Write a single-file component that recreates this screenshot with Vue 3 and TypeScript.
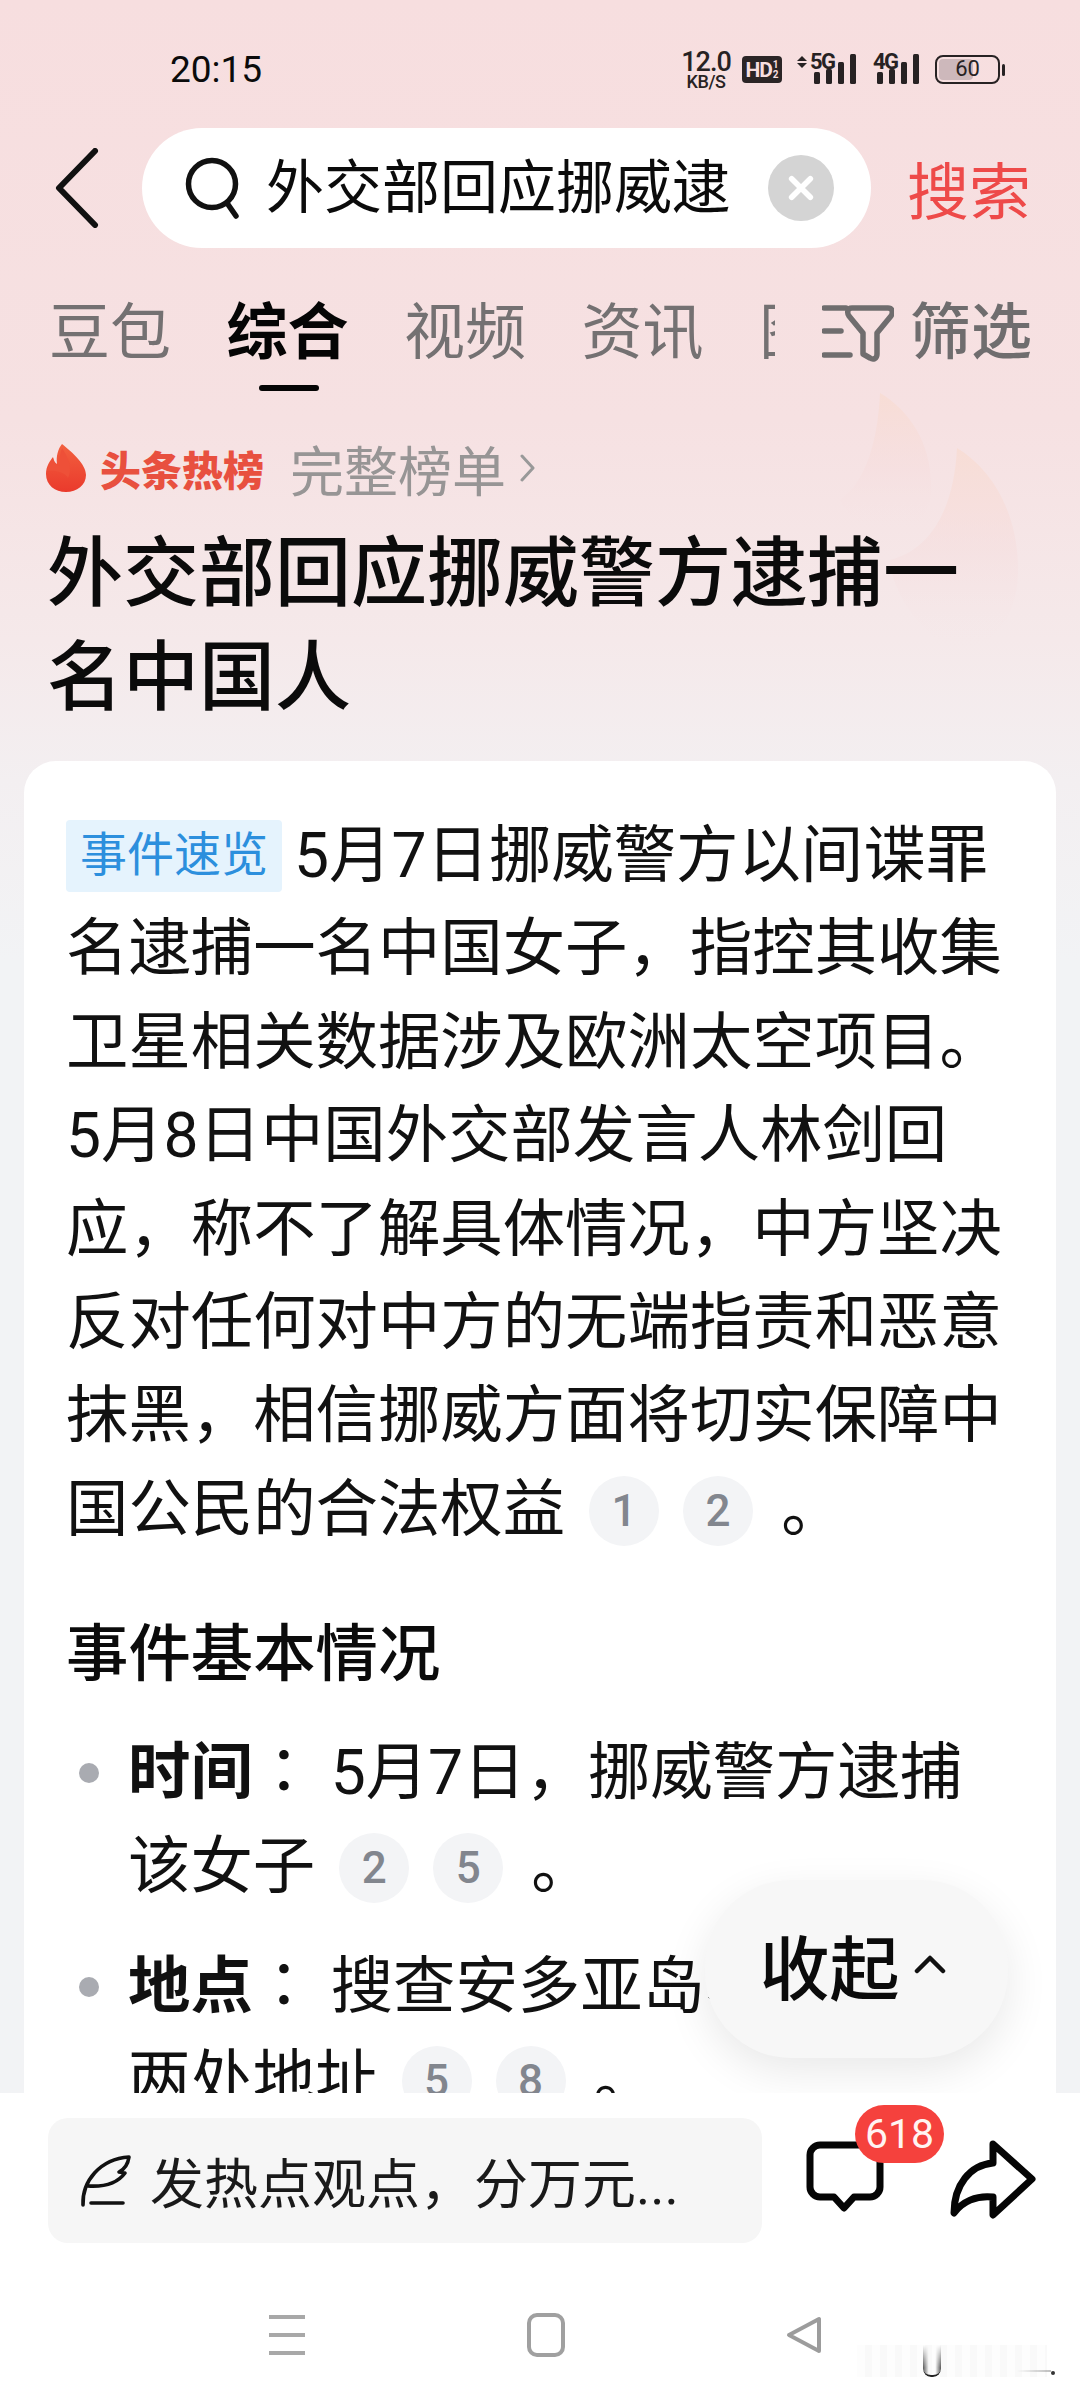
<script setup lang="ts">
const tabs = [
  { label: '豆包' },
  { label: '综合', active: true },
  { label: '视频' },
  { label: '资讯' },
  { label: '图片' },
]

const signal5g = [12, 15, 22, 30]
const signal4g = [12, 15, 22, 30]
</script>

<template>
  <div class="page">
    <main class="main">
      <svg class="flames" viewBox="0 0 180 260" aria-hidden="true">
        <defs>
          <linearGradient id="flameFill" x1="0" y1="0" x2="0" y2="1">
            <stop offset="0" stop-color="#f8dcd2" stop-opacity="0.8" />
            <stop offset="0.5" stop-color="#f6dcdc" stop-opacity="0.45" />
            <stop offset="1" stop-color="#f6e6e8" stop-opacity="0" />
          </linearGradient>
        </defs>
        <path d="M40 3C72 22 96 60 90 110C86 126 76 142 60 150C40 160 10 130 0 110C26 92 38 50 40 3Z" fill="url(#flameFill)" />
        <path d="M117 58C150 78 178 120 178 180C178 220 160 250 130 258C90 264 50 200 50 170C90 160 114 120 117 58Z" fill="url(#flameFill)" />
      </svg>

      <header class="status">
        <span class="time">20:15</span>
        <div class="status__right">
          <div class="speed">
            <span class="speed__num">12.0</span>
            <span class="speed__unit">KB/S</span>
          </div>
          <div class="hd">
            <span class="hd__main">HD</span>
            <span class="hd__sub"><i>1</i><i>2</i></span>
          </div>
          <div class="signal signal--5g">
            <span class="signal__arrows"><b class="up" /><b class="down" /></span>
            <span class="signal__label">5G</span>
            <div class="signal__bars">
              <span v-for="(h, i) in signal5g" :key="i" :style="{ height: h + 'px' }" />
            </div>
          </div>
          <div class="signal signal--4g">
            <span class="signal__label">4G</span>
            <div class="signal__bars">
              <span v-for="(h, i) in signal4g" :key="i" :style="{ height: h + 'px' }" />
            </div>
          </div>
          <div class="battery">
            <div class="battery__body">
              <span class="battery__fill" />
              <span class="battery__num">60</span>
            </div>
            <span class="battery__nub" />
          </div>
        </div>
      </header>

      <div class="search">
        <svg class="back" viewBox="0 0 44 80">
          <path d="M40 3L4 40L40 77" fill="none" stroke="#111" stroke-width="6" stroke-linecap="round" stroke-linejoin="round" />
        </svg>
        <div class="search__pill">
          <svg class="search__icon" viewBox="0 0 56 62">
            <circle cx="27" cy="27" r="23.5" fill="none" stroke="#111" stroke-width="5.5" />
            <path d="M42 46L51 59" fill="none" stroke="#111" stroke-width="5.5" stroke-linecap="round" />
          </svg>
          <span class="search__text">外交部回应挪威逮</span>
          <span class="search__clear">
            <svg viewBox="0 0 30 30">
              <path d="M5 5L25 25M25 5L5 25" stroke="#fff" stroke-width="6" stroke-linecap="round" />
            </svg>
          </span>
        </div>
        <span class="search__btn">搜索</span>
      </div>

      <nav class="tabs">
        <div class="tabs__list">
          <span
            v-for="tab in tabs"
            :key="tab.label"
            class="tab"
            :class="{ 'tab--active': tab.active }"
          >{{ tab.label }}</span>
        </div>
        <div class="filter">
          <svg viewBox="0 0 72 58">
            <path d="M2 4H24M2 27H19M2 51H28" fill="none" stroke="#6f6d6e" stroke-width="5.5" stroke-linecap="round" />
            <path d="M30 4H66C71 4 71 9 69 12L55 29V50C55 55 51 56 48 54L41 50V29L27 12C25 9 25 4 30 4Z" fill="none" stroke="#6f6d6e" stroke-width="5.5" stroke-linejoin="round" />
          </svg>
          <span>筛选</span>
        </div>
      </nav>

      <div class="hot">
        <svg class="hot__flame" viewBox="0 0 40 48">
          <defs>
            <linearGradient id="hotFill" x1="0" y1="0" x2="0" y2="1">
              <stop offset="0" stop-color="#f2603f" />
              <stop offset="1" stop-color="#ea3a2c" />
            </linearGradient>
          </defs>
          <path d="M16 0C26 8 40 20 40 31C40 41 31 48 20 48C9 48 0 41 0 30C0 22 4 17 7 13C8 17 9 19 11 20C10 12 12 5 16 0Z" fill="url(#hotFill)" />
          <path d="M1 27C8 26 19 28 22 34C26 26 24 16 16 4C14 9 13 16 14 22C11 21 8 19 7 14C4 18 2 22 1 27Z" fill="#ee5038" />
        </svg>
        <span class="hot__brand">头条热榜</span>
        <span class="hot__more">完整榜单</span>
        <svg class="hot__chevron" viewBox="0 0 16 30">
          <path d="M2 3L13 15L2 27" fill="none" stroke="#999" stroke-width="3" stroke-linecap="round" stroke-linejoin="round" />
        </svg>
      </div>

      <h1 class="title">外交部回应挪威警方逮捕一名中国人</h1>

      <section class="card">
        <p class="para">
          <span class="tag">事件速览</span>5月7日挪威警方以间谍罪名逮捕一名中国女子，指控其收集卫星相关数据涉及欧洲太空项目。5月8日中国外交部发言人林剑回应，称不了解具体情况，中方坚决反对任何对中方的无端指责和恶意抹黑，相信挪威方面将切实保障中国公民的合法权益<span class="cite">1</span><span class="cite cite--last">2</span>。
        </p>

        <h2 class="subhead">事件基本情况</h2>

        <ul class="facts">
          <li>
            <strong>时间</strong><span class="colon">：</span> 5月7日，挪威警方逮捕该女子<span class="cite">2</span><span class="cite cite--last">5</span>。
          </li>
          <li>
            <strong>地点</strong><span class="colon">：</span> 搜查安多亚岛、奥斯陆<br />两处地址<span class="cite">5</span><span class="cite cite--last">8</span>。
          </li>
        </ul>
      </section>

      <button class="collapse">
        <span>收起</span>
        <svg viewBox="0 0 32 20">
          <path d="M3 17L16 4L29 17" fill="none" stroke="#111" stroke-width="4.5" stroke-linecap="round" stroke-linejoin="round" />
        </svg>
      </button>
    </main>

    <footer class="bottom">
      <div class="actions">
        <div class="input">
          <svg class="input__icon" viewBox="0 0 52 52">
            <path d="M3 50C2 26 20 4 49 2C48 9 45 14 39 17L45 18C37 29 24 32 8 31" fill="none" stroke="#111" stroke-width="3.6" stroke-linecap="round" stroke-linejoin="round" />
            <path d="M11 48H43" fill="none" stroke="#111" stroke-width="3.6" stroke-linecap="round" />
          </svg>
          <span>发热点观点，分万元...</span>
        </div>
        <div class="comment">
          <svg viewBox="0 0 90 80">
            <path d="M20 10H70A10 10 0 0 1 80 20V52A10 10 0 0 1 70 62H54L44 73L34 62H20A10 10 0 0 1 10 52V20A10 10 0 0 1 20 10Z" fill="none" stroke="#050505" stroke-width="7" stroke-linejoin="round" />
          </svg>
          <span class="comment__badge">618</span>
        </div>
        <svg class="share" viewBox="0 0 90 80">
          <path d="M45 4L84 39L45 75V57C28 55 14 62 6 73C6 45 22 25 45 23Z" fill="none" stroke="#050505" stroke-width="7" stroke-linejoin="round" />
        </svg>
      </div>

      <div class="sysnav">
        <svg class="sysnav__menu" viewBox="0 0 38 42">
          <path d="M1 3H37M1 21H37M1 39H37" stroke="#a8a8a8" stroke-width="4" />
        </svg>
        <svg class="sysnav__home" viewBox="0 0 38 44">
          <rect x="2" y="2" width="34" height="40" rx="8" fill="none" stroke="#a0a0a0" stroke-width="4" />
        </svg>
        <svg class="sysnav__back" viewBox="0 0 36 38">
          <path d="M33 3V35L3 19Z" fill="none" stroke="#9c9c9c" stroke-width="4" stroke-linejoin="round" />
        </svg>
      </div>

      <div class="smear">
        <span class="smear__u" />
        <span class="smear__tail" />
        <span class="smear__dot" />
      </div>
    </footer>
  </div>
</template>

<style scoped>
.page {
  position: relative;
  width: 1080px;
  height: 2400px;
  display: flex;
  flex-direction: column;
  overflow: hidden;
  background: #fff;
  color: #0b0b0b;
  font-family: Roboto, 'Noto Sans CJK SC', sans-serif;
}

.main {
  position: relative;
  flex: 0 0 2093px;
  overflow: hidden;
  background: linear-gradient(180deg, #f7dedf 0, #f6e1e2 420px, #f5e9ea 640px, #f3eff1 780px, #f2f3f5 960px);
}

.flames {
  position: absolute;
  left: 840px;
  top: 390px;
  width: 180px;
  height: 260px;
}

/* status bar */
.status {
  position: relative;
  height: 128px;
  padding: 50px 0 0 170px;
  box-sizing: border-box;
  display: flex;
  align-items: flex-start;
}

.time {
  width: 513px;
  margin-top: 1px;
  font-size: 37px;
  line-height: 38px;
}

.status__right {
  display: flex;
  align-items: flex-start;
  color: #272223;
}

.speed {
  width: 46px;
  margin-right: 13px;
  display: flex;
  flex-direction: column;
  align-items: center;
  margin-top: 1px;
  font-weight: 500;
}

.speed__num {
  font-size: 27px;
  line-height: 23px;
  letter-spacing: -1px;
}

.speed__unit {
  font-size: 18px;
  line-height: 15px;
  letter-spacing: -0.4px;
}

.hd {
  width: 40px;
  height: 27px;
  margin-top: 6px;
  border-radius: 4px;
  background: #2b2526;
  color: #f7dedf;
  display: flex;
  align-items: center;
  justify-content: center;
  gap: 1px;
  font-weight: 700;
}

.hd__main {
  font-size: 21px;
  letter-spacing: -1px;
}

.hd__sub {
  display: flex;
  flex-direction: column;
  font-size: 10px;
  line-height: 10px;
}

.hd__sub i {
  font-style: normal;
}

.signal {
  position: relative;
  height: 31px;
  margin-top: 3px;
}

.signal--5g {
  width: 59px;
  margin-left: 15px;
}

.signal--4g {
  width: 46px;
  margin-left: 17px;
}

.signal__label {
  position: absolute;
  top: 0;
  font-size: 22px;
  line-height: 18px;
  font-weight: 700;
  letter-spacing: -1.5px;
}

.signal--5g .signal__label {
  left: 13px;
}

.signal--4g .signal__label {
  left: 0;
}

.signal__arrows {
  position: absolute;
  left: 0;
  top: 3px;
  display: flex;
  flex-direction: column;
  gap: 2px;
}

.signal__arrows b {
  width: 0;
  height: 0;
  border-left: 5px solid transparent;
  border-right: 5px solid transparent;
}

.signal__arrows .up {
  border-bottom: 5px solid #272223;
}

.signal__arrows .down {
  border-top: 5px solid #272223;
}

.signal__bars {
  position: absolute;
  right: 0;
  bottom: 0;
  display: flex;
  align-items: flex-end;
  gap: 5.5px;
}

.signal__bars span {
  width: 6.5px;
  border-radius: 1.5px;
  background: #272223;
}

.battery {
  display: flex;
  align-items: center;
  margin: 5px 0 0 16px;
}

.battery__body {
  position: relative;
  width: 65px;
  height: 29px;
  box-sizing: border-box;
  border: 2.5px solid #272223;
  border-radius: 8px;
  text-align: center;
}

.battery__fill {
  position: absolute;
  left: 2px;
  top: 2px;
  bottom: 2px;
  width: 34px;
  border-radius: 4px;
  background: #cdb8bb;
}

.battery__num {
  position: relative;
  font-size: 22px;
  line-height: 24px;
  display: block;
}

.battery__nub {
  width: 3px;
  height: 12px;
  margin-left: 2px;
  border-radius: 2px;
  background: #272223;
}

/* search */
.search {
  position: relative;
  height: 120px;
  display: flex;
  align-items: center;
  padding-left: 55px;
}

.back {
  width: 44px;
  height: 80px;
}

.search__pill {
  width: 729px;
  height: 120px;
  margin-left: 43px;
  padding-left: 43px;
  box-sizing: border-box;
  display: flex;
  align-items: center;
  border-radius: 60px;
  background: #fff;
}

.search__icon {
  width: 56px;
  height: 62px;
}

.search__text {
  margin-left: 25px;
  font-size: 58px;
  line-height: 70px;
  white-space: nowrap;
}

.search__clear {
  width: 66px;
  height: 66px;
  margin-left: 38px;
  border-radius: 50%;
  background: #d4d4d4;
  display: flex;
  align-items: center;
  justify-content: center;
}

.search__clear svg {
  width: 28px;
  height: 28px;
}

.search__btn {
  margin-left: 36px;
  font-size: 62px;
  color: #ee4a49;
  white-space: nowrap;
}

/* tabs */
.tabs {
  position: relative;
  height: 178px;
  display: flex;
  align-items: flex-start;
}

.tabs__list {
  flex: 0 0 726px;
  margin-left: 49px;
  display: flex;
  gap: 55.5px;
  overflow: hidden;
}

.tab {
  position: relative;
  flex: none;
  height: 143px;
  line-height: 170px;
  font-size: 61px;
  color: #747172;
  white-space: nowrap;
}

.tab--active {
  color: #050505;
  font-weight: 700;
}

.tab--active::after {
  content: '';
  position: absolute;
  left: 32px;
  bottom: 0;
  width: 60px;
  height: 6px;
  border-radius: 3px;
  background: #050505;
}

.filter {
  height: 170px;
  display: flex;
  align-items: center;
  gap: 16px;
  margin-left: 47px;
  font-size: 61px;
  font-weight: 500;
  line-height: 170px;
  color: #6f6d6e;
  white-space: nowrap;
}

.filter svg {
  width: 72px;
  height: 58px;
}

/* hot row */
.hot {
  position: relative;
  height: 80px;
  padding-left: 46px;
  margin-top: 2px;
  display: flex;
  align-items: center;
}

.hot__flame {
  width: 40px;
  height: 48px;
}

.hot__brand {
  margin-left: 14px;
  font-size: 41px;
  font-weight: 900;
  color: #e8503f;
  white-space: nowrap;
}

.hot__more {
  margin-left: 26px;
  font-size: 54px;
  color: #979595;
  white-space: nowrap;
}

.hot__chevron {
  width: 16px;
  height: 30px;
  margin-left: 14px;
}

.title {
  position: relative;
  width: 980px;
  margin: 0;
  padding: 14px 0 0 47px;
  font-size: 76px;
  line-height: 104px;
  font-weight: 500;
}

/* card */
.card {
  position: relative;
  margin: 31px 24px 0;
  padding: 48px 42px 0;
  border-radius: 32px;
  background: #fff;
}

.para,
.facts {
  font-size: 62.4px;
  line-height: 93.4px;
  color: #111;
}

.para {
  margin: 0;
}

.tag {
  display: inline-block;
  height: 72px;
  line-height: 70px;
  margin-right: 12px;
  padding: 0 14px;
  border-radius: 4px;
  vertical-align: 6px;
  font-size: 47px;
  color: #2c8fdd;
  background: #e5f3fd;
}

/* top-aligned so the circle can't move the line's baseline */
.cite {
  display: inline-flex;
  align-items: center;
  justify-content: center;
  width: 70px;
  height: 70px;
  margin: 13px 0 0 24px;
  border-radius: 50%;
  vertical-align: top;
  font-size: 44px;
  font-weight: 500;
  line-height: 70px;
  color: #82868e;
  background: #f3f4f6;
}

.cite--last {
  margin-right: 28px;
}

.subhead {
  margin: 52px 0 0;
  font-size: 62.4px;
  line-height: 93px;
  font-weight: 500;
}

.facts {
  margin: 25px 0 0;
  padding: 0 0 0 62px;
  list-style: none;
}

.facts li {
  position: relative;
  margin-bottom: 27px;
}

.facts li::before {
  content: '';
  position: absolute;
  left: -49px;
  top: 37px;
  width: 20px;
  height: 20px;
  border-radius: 50%;
  background: #a9abb1;
}

.facts strong {
  font-weight: 700;
}

/* centred colon comes from the TC face; inline-block keeps it out of the line box */
.colon {
  display: inline-block;
  font-family: 'Noto Sans CJK TC', sans-serif;
  line-height: 62px;
}

/* floating collapse button */
.collapse {
  position: absolute;
  left: 705px;
  top: 1880px;
  width: 303px;
  height: 178px;
  padding: 0 8px 10px 0;
  display: flex;
  align-items: center;
  justify-content: center;
  gap: 14px;
  border: 0;
  border-radius: 86px;
  background: #f7f7f7;
  box-shadow: 0 14px 44px rgba(0, 0, 0, 0.09);
  font-family: inherit;
  font-size: 70px;
  font-weight: 500;
  color: #0b0b0b;
}

.collapse svg {
  width: 32px;
  height: 20px;
}

/* bottom */
.bottom {
  position: relative;
  flex: 1;
  background: #fff;
}

.actions {
  height: 175px;
  padding-top: 25px;
  box-sizing: border-box;
  display: flex;
  align-items: flex-start;
}

.input {
  width: 714px;
  height: 125px;
  margin-left: 48px;
  padding-left: 32px;
  box-sizing: border-box;
  display: flex;
  align-items: center;
  gap: 18px;
  border-radius: 20px;
  background: #f6f6f6;
  font-size: 54px;
  color: #1a1a1a;
  white-space: nowrap;
}

.input__icon {
  width: 52px;
  height: 52px;
}

.comment {
  position: relative;
  width: 90px;
  height: 80px;
  margin: 17px 0 0 38px;
}

.comment svg {
  width: 90px;
  height: 80px;
  display: block;
}

.comment__badge {
  position: absolute;
  left: 55px;
  top: -30px;
  width: 89px;
  height: 58px;
  border-radius: 29px;
  background: #f5413d;
  color: #fff4f2;
  font-size: 41px;
  line-height: 58px;
  text-align: center;
}

.share {
  width: 90px;
  height: 80px;
  margin: 22px 0 0 58px;
}

.sysnav {
  position: relative;
  height: 132px;
  padding-left: 268px;
  display: flex;
  align-items: flex-start;
}

.sysnav__menu {
  width: 38px;
  height: 42px;
  margin-top: 46px;
}

.sysnav__home {
  width: 38px;
  height: 44px;
  margin: 45px 0 0 221px;
}

.sysnav__back {
  width: 36px;
  height: 38px;
  margin: 48px 0 0 221px;
}

.smear {
  position: absolute;
  left: 857px;
  top: 252px;
  width: 190px;
  height: 32px;
  background: repeating-linear-gradient(90deg, rgba(0, 0, 0, 0.008) 0 8px, rgba(0, 0, 0, 0.022) 8px 15px);
}

.smear__u {
  position: absolute;
  left: 66px;
  top: 0;
  width: 18px;
  height: 32px;
  box-sizing: border-box;
  border-bottom: 2px solid #222;
  border-radius: 0 0 8px 8px;
  background: linear-gradient(90deg, rgba(0, 0, 0, 0.65), transparent 32%, transparent 68%, rgba(0, 0, 0, 0.65));
  -webkit-mask-image: linear-gradient(180deg, transparent, #000 70%);
  mask-image: linear-gradient(180deg, transparent, #000 70%);
}

.smear__tail {
  position: absolute;
  left: 160px;
  top: 25px;
  width: 34px;
  height: 2px;
  background: linear-gradient(90deg, transparent, rgba(0, 0, 0, 0.25));
}

.smear__dot {
  position: absolute;
  left: 194px;
  top: 26px;
  width: 4px;
  height: 4px;
  border-radius: 50%;
  background: #333;
}
</style>
